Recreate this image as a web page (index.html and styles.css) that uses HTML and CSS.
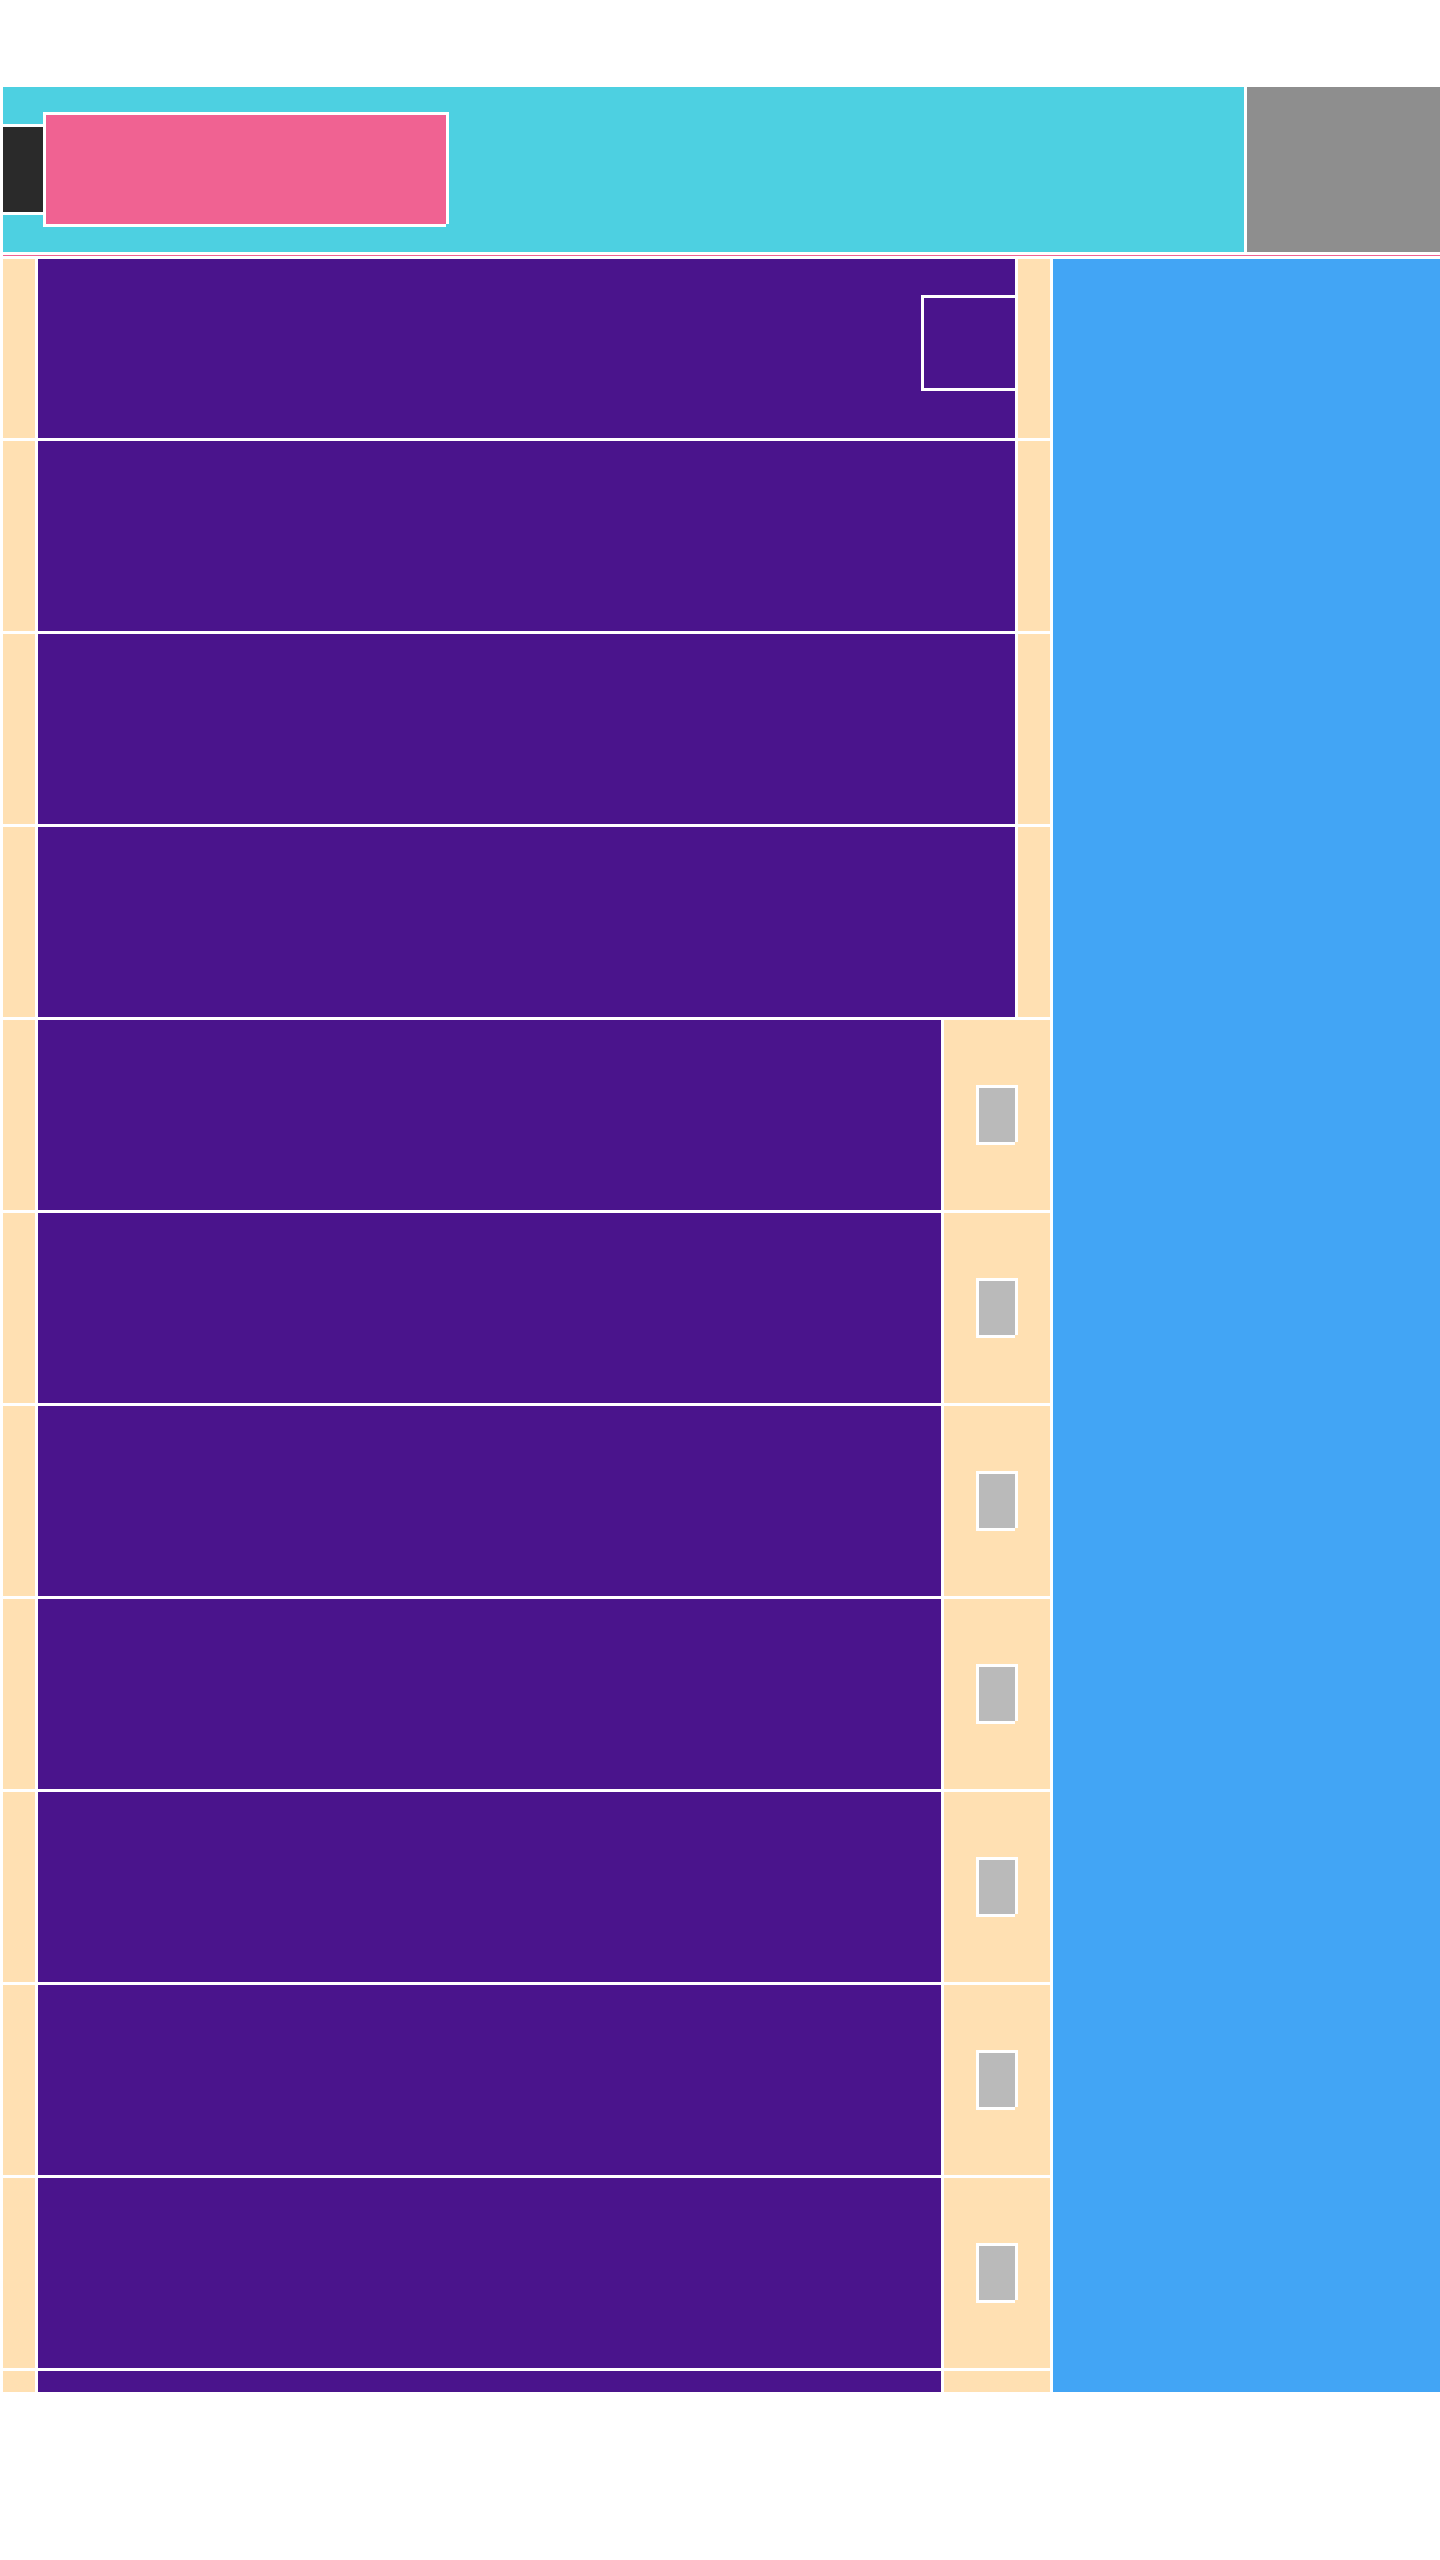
FILE: index.html
```html
<!DOCTYPE html>
<html lang="en">
<head>
<meta charset="utf-8">
<title>Layout</title>
<link rel="stylesheet" href="styles.css">
</head>
<body>
<div class="page">
  <header class="header">
    <div class="header-main">
      <div class="menu-block"></div>
      <div class="brand-block"></div>
    </div>
    <div class="header-side"></div>
  </header>
  <div class="rule"></div>
  <main class="main">
    <section class="rows">
      <div class="row row-first">
        <div class="cell-start"></div>
        <div class="cell-body cell-body-top"><div class="badge-box"></div></div>
        <div class="cell-end"></div>
      </div>
      <div class="row">
        <div class="cell-start"></div>
        <div class="cell-body"></div>
        <div class="cell-end"></div>
      </div>
      <div class="row">
        <div class="cell-start"></div>
        <div class="cell-body"></div>
        <div class="cell-end"></div>
      </div>
      <div class="row">
        <div class="cell-start"></div>
        <div class="cell-body"></div>
        <div class="cell-end"></div>
      </div>
      <div class="row">
        <div class="cell-start"></div>
        <div class="cell-body"></div>
        <div class="cell-end cell-end-wide"><div class="chip"></div></div>
      </div>
      <div class="row">
        <div class="cell-start"></div>
        <div class="cell-body"></div>
        <div class="cell-end cell-end-wide"><div class="chip"></div></div>
      </div>
      <div class="row">
        <div class="cell-start"></div>
        <div class="cell-body"></div>
        <div class="cell-end cell-end-wide"><div class="chip"></div></div>
      </div>
      <div class="row">
        <div class="cell-start"></div>
        <div class="cell-body"></div>
        <div class="cell-end cell-end-wide"><div class="chip"></div></div>
      </div>
      <div class="row">
        <div class="cell-start"></div>
        <div class="cell-body"></div>
        <div class="cell-end cell-end-wide"><div class="chip"></div></div>
      </div>
      <div class="row">
        <div class="cell-start"></div>
        <div class="cell-body"></div>
        <div class="cell-end cell-end-wide"><div class="chip"></div></div>
      </div>
      <div class="row">
        <div class="cell-start"></div>
        <div class="cell-body"></div>
        <div class="cell-end cell-end-wide"><div class="chip"></div></div>
      </div>
      <div class="row">
        <div class="cell-start"></div>
        <div class="cell-body"></div>
        <div class="cell-end cell-end-wide"><div class="chip"></div></div>
      </div>
    </section>
    <aside class="side"></aside>
  </main>
</div>
</body>
</html>
```

FILE: styles.css
```css
html, body {
  margin: 0;
  padding: 0;
  background: #ffffff;
  font-family: "Liberation Sans", Arial, sans-serif;
}

.page {
  padding: 87px 0 0 3px;
}

.header {
  display: flex;
  gap: 3px;
  height: 165px;
}

.header-main {
  flex: 0 0 1241px;
  background: #4dd0e1;
  display: flex;
  align-items: center;
}

.menu-block {
  width: 40px;
  height: 85px;
  background: #2a2a2a;
  border-top: 3px solid #ffffff;
  border-bottom: 3px solid #ffffff;
}

.brand-block {
  position: relative;
  width: 400px;
  height: 109px;
  background: #f06292;
  border: 3px solid #ffffff;
  border-bottom: 0;
  margin-bottom: 3px;
}

.brand-block::after {
  content: "";
  position: absolute;
  left: -3px;
  right: 0;
  bottom: -3px;
  height: 3px;
  background: #ffffff;
}

.header-side {
  flex: 1;
  background: #8e8e8e;
}

.rule {
  height: 1px;
  margin: 3px 0;
  background: #f06292;
}

.main {
  display: flex;
  gap: 3px;
  height: 2133px;
  overflow: hidden;
}

.rows {
  flex: 0 0 1047px;
  display: flex;
  flex-direction: column;
  gap: 3px;
}

.side {
  flex: 1;
  background: #42a5f5;
}

.row {
  flex: 0 0 190px;
  display: flex;
  gap: 3px;
}

.row-first {
  flex-basis: 179px;
}

.cell-start {
  flex: 0 0 32px;
  background: #ffe0b2;
}

.cell-body {
  flex: 1;
  background: #4a148c;
}

.cell-body-top {
  display: flex;
  justify-content: flex-end;
  align-items: flex-start;
  padding-top: 36px;
}

.badge-box {
  width: 91px;
  height: 90px;
  background: #4a148c;
  border: 3px solid #ffffff;
  border-right: 0;
}

.cell-end {
  flex: 0 0 32px;
  background: #ffe0b2;
}

.cell-end-wide {
  flex-basis: 106px;
  display: flex;
  align-items: center;
  justify-content: center;
}

.chip {
  position: relative;
  width: 36px;
  height: 54px;
  background: #bababa;
  border: 3px solid #ffffff;
  border-bottom: 0;
  margin-bottom: 3px;
}

.chip::after {
  content: "";
  position: absolute;
  left: -3px;
  right: 0;
  bottom: -3px;
  height: 3px;
  background: #ffffff;
}
```
